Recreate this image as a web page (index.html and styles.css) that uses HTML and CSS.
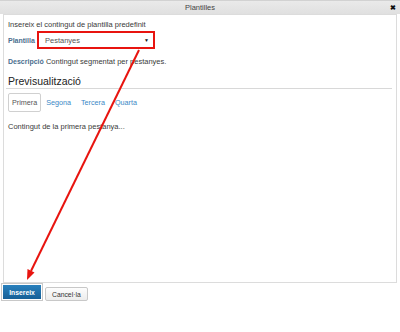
FILE: index.html
```html
<!DOCTYPE html>
<html lang="ca">
<head>
    <meta charset="UTF-8">
    <meta name="viewport" content="width=device-width, initial-scale=1.0">
    <title>Plantilles</title>
    <link rel="stylesheet" href="styles.css">
</head>
<body>

    <div class="dialog">
        <!-- Barra de títol -->
        <div class="titlebar">
            <span class="title">Plantilles</span>
            <span class="close">&#10006;</span>
        </div>

        <!-- Contingut -->
        <div class="panel">
            <p class="intro">Insereix el contingut de plantilla predefinit</p>

            <div class="field">
                <span class="label">Plantilla</span>
                <div class="select highlight">
                    <span>Pestanyes</span>
                    <span class="caret">&#9660;</span>
                </div>
            </div>

            <p class="desc"><span class="label">Descripció</span> Contingut segmentat per pestanyes.</p>

            <h2 class="preview-title">Previsualització</h2>

            <ul class="tabs">
                <li class="tab active">Primera</li>
                <li class="tab">Segona</li>
                <li class="tab">Tercera</li>
                <li class="tab">Quarta</li>
            </ul>

            <p class="tab-content">Contingut de la primera pestanya...</p>
        </div>

        <!-- Botons -->
        <div class="buttons">
            <button class="btn btn-primary highlight">Insereix</button>
            <button class="btn">Cancel·la</button>
        </div>

        <!-- Fletxa vermella -->
        <svg class="arrow" width="400" height="332" viewBox="0 0 400 332">
            <line x1="139" y1="50" x2="31" y2="271" stroke="#e8140f" stroke-width="2"/>
            <polygon points="27,280 34.5,272.5 27.5,269" fill="#e8140f"/>
        </svg>
    </div>

</body>
</html>
```

FILE: styles.css
```css
body {
    margin: 0;
    font-family: "Liberation Sans", Arial, sans-serif;
    background-color: #fff;
    color: #333;
}
.dialog {
    position: relative;
    width: 400px;
    height: 332px;
}
.titlebar {
    height: 14px;
    line-height: 14px;
    background: linear-gradient(#eaeaea, #e0e0e0);
    border-top: 1px solid #d2d2d2;
    box-sizing: border-box;
    display: flex;
    justify-content: center;
    position: relative;
    font-size: 7.5px;
    color: #444;
}
.close {
    position: absolute;
    right: 4px;
    top: 0;
    font-size: 7px;
    font-weight: bold;
    color: #111;
}
.panel {
    margin: 0 3px;
    height: 269px;
    box-sizing: border-box;
    border: 1px solid #dcdcdc;
    padding: 5px 4px 0 4px;
    font-size: 7.5px;
    color: #3a3a3a;
}
.panel p {
    margin: 0;
    line-height: 10px;
}
.label {
    font-weight: bold;
    color: #4b6f8f;
    font-size: 7px;
}
.field {
    display: flex;
    align-items: center;
    margin-top: 1px;
    height: 18px;
}
.field .label {
    width: 29px;
}
.select {
    width: 118px;
    height: 18px;
    box-sizing: border-box;
    display: flex;
    align-items: center;
    justify-content: space-between;
    padding: 0 4px 0 6px;
    color: #555;
}
.caret {
    font-size: 5px;
    color: #111;
}
.highlight {
    border: 2px solid #e8140f;
}
.desc {
    margin-top: 8px !important;
}
.preview-title {
    margin: 7px 0 0 -2px;
    padding-left: 2px;
    font-size: 10.5px;
    font-weight: normal;
    line-height: 14px;
    color: #222;
    border-bottom: 1px solid #d8d8d8;
}
.tabs {
    list-style: none;
    margin: 4px 0 0 0;
    padding: 0;
    display: flex;
}
.tab {
    height: 19px;
    line-height: 17px;
    box-sizing: border-box;
    padding: 0 4px;
    color: #3a88c6;
    border: 1px solid transparent;
    font-size: 7.2px;
}
.tab.active {
    color: #555;
    border-color: #d0d0d0;
    border-radius: 2px;
    padding: 0 3px;
}
.tab-content {
    margin-top: 10px !important;
}
.buttons {
    display: flex;
    align-items: flex-end;
    gap: 2px;
    padding-left: 1px;
    height: 18px;
}
.btn {
    font-family: "Liberation Sans", Arial, sans-serif;
    font-size: 6.8px;
    height: 14px;
    padding: 0 6px;
    border: 1px solid #c8c8c8;
    border-radius: 2px;
    background: linear-gradient(#fdfdfd, #ececec);
    color: #333;
    cursor: pointer;
}
.btn-primary {
    height: 18px;
    width: 42px;
    padding: 0;
    font-weight: bold;
    color: #fff;
    background: linear-gradient(#2a82bf, #155d94);
    box-shadow: inset 0 0 0 1px #fff;
    border-radius: 0;
}
.arrow {
    position: absolute;
    top: 0;
    left: 0;
    pointer-events: none;
}
```
